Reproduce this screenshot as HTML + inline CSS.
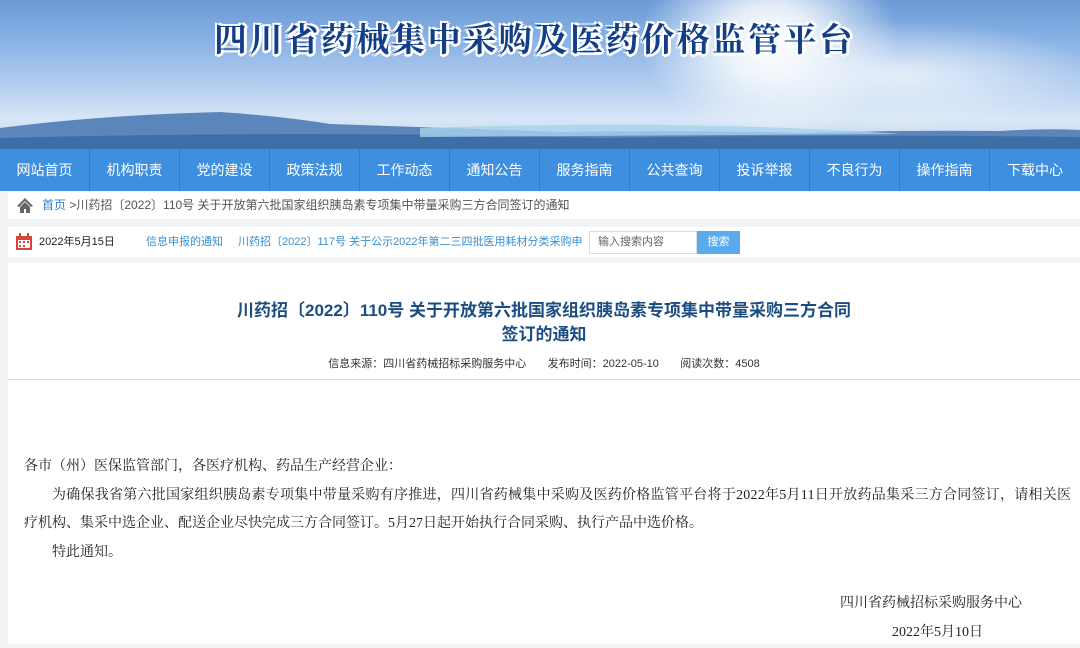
<!DOCTYPE html>
<html><head><meta charset="utf-8"><style>
*{margin:0;padding:0;box-sizing:border-box}
body{width:1080px;height:644px;overflow:hidden;background:#f2f3f5;font-family:"Liberation Sans","Noto Sans CJK SC",sans-serif;position:relative}
.banner{position:absolute;left:0;top:0;width:1080px;height:149px;background:linear-gradient(180deg,#6a9ad6 0%,#8db4e6 30%,#b6d0f0 60%,#d8e6f6 80%,#c4d8ee 100%);overflow:hidden}
.sun{position:absolute;left:640px;top:-60px;width:260px;height:200px;background:radial-gradient(ellipse at center,#fff 0%,rgba(255,255,255,.8) 25%,rgba(255,255,255,0) 70%)}
.cloud{position:absolute;left:700px;top:20px;width:400px;height:110px;background:radial-gradient(ellipse,rgba(255,255,255,.7),rgba(255,255,255,0) 70%)}
.title{position:absolute;left:214px;top:14px;font-size:33px;font-weight:bold;color:#123e88;letter-spacing:2.6px;font-family:"Noto Serif CJK SC","Noto Sans CJK SC",serif;text-shadow:-2px -2px 0 #fff,2px -2px 0 #fff,-2px 2px 0 #fff,2px 2px 0 #fff,0 3px 0 #fff,3px 0 0 #fff}
.nav{position:absolute;left:0;top:149px;width:1080px;height:42px;background:#3f8fe0;display:flex}
.nav div{width:90.2px;height:42px;line-height:42px;text-align:center;color:#fff;font-size:14px;border-right:1px solid #2f7acb}
.crumb{position:absolute;left:8px;top:192px;width:1072px;height:27px;background:#fff;font-size:12px;color:#555;line-height:27px;padding-left:34px}
.crumb a{color:#3a7fc8}
.bar{position:absolute;left:8px;top:227px;width:1072px;height:30px;background:#fff;font-size:11px;line-height:30px}
.main{position:absolute;left:8px;top:263px;width:1072px;height:381px;background:#fff}
h1{position:absolute;left:0;width:1072px;top:36px;text-align:center;font-size:17px;color:#1b4d82;line-height:24px;font-weight:bold}
.meta{position:absolute;top:92px;left:0;width:1072px;text-align:center;font-size:11px;color:#333}
.hr{position:absolute;top:116px;left:0;width:1072px;border-top:1px solid #ddd}
.body{position:absolute;left:16px;top:190px;width:1100px;font-family:"Liberation Serif","Noto Serif CJK SC",serif;font-size:14px;color:#222;line-height:28.5px;white-space:nowrap}
.body p{height:28.5px}
</style></head><body>
<div class="banner"><div class="cloud"></div><div class="sun"></div>
<svg style="position:absolute;left:0;top:100px" width="1080" height="49"><path d="M0 28 Q100 15 220 12 Q280 16 330 24 Q450 28 560 32 Q700 30 800 33 Q900 30 1000 31 Q1050 28 1080 30 L1080 49 L0 49Z" fill="#5b86bb"/><path d="M0 38 Q300 30 600 38 Q850 34 1080 37 L1080 49 L0 49Z" fill="#3e6ea8"/><path d="M420 28 Q600 22 760 27 Q850 30 900 34 L420 37Z" fill="#a8d2ec" opacity=".8"/></svg>
<div class="title">四川省药械集中采购及医药价格监管平台</div></div>
<div class="nav"><div>网站首页</div><div>机构职责</div><div>党的建设</div><div>政策法规</div><div>工作动态</div><div>通知公告</div><div>服务指南</div><div>公共查询</div><div>投诉举报</div><div>不良行为</div><div>操作指南</div><div style="border:none">下载中心</div></div>
<div class="crumb"><svg style="position:absolute;left:8px;top:5px" width="18" height="16"><path d="M9 1 L1 9 L3 10 L9 4 L15 10 L17 9Z M4 10 L4 16 L8 16 L8 12 L10 12 L10 16 L14 16 L14 10 L9 5Z" fill="#666"/></svg><a>首页</a> &gt;川药招〔2022〕110号 关于开放第六批国家组织胰岛素专项集中带量采购三方合同签订的通知</div>
<div class="bar"><svg style="position:absolute;left:8px;top:6px" width="16" height="17"><rect x="0" y="3" width="16" height="14" fill="#d9443a"/><rect x="2" y="7" width="12" height="8" fill="#fff"/><rect x="3" y="0" width="2" height="4" fill="#d9443a"/><rect x="11" y="0" width="2" height="4" fill="#d9443a"/><g fill="#d9443a"><rect x="3" y="8" width="2" height="2"/><rect x="7" y="8" width="2" height="2"/><rect x="11" y="8" width="2" height="2"/><rect x="3" y="12" width="2" height="2"/><rect x="7" y="12" width="2" height="2"/></g></svg>
<span style="position:absolute;left:31px;color:#222">2022年5月15日</span>
<span style="position:absolute;left:138px;color:#3a8fd0;white-space:nowrap">信息申报的通知</span>
<span style="position:absolute;left:230px;color:#3a8fd0;white-space:nowrap">川药招〔2022〕117号 关于公示2022年第二三四批医用耗材分类采购申</span>
<div style="position:absolute;left:581px;top:4px;width:108px;height:23px;border:1px solid #ddd;color:#666;line-height:21px;padding-left:8px;background:#fff">输入搜索内容</div>
<div style="position:absolute;left:689px;top:4px;width:43px;height:23px;background:#5aaaf0;color:#fff;line-height:23px;text-align:center">搜索</div></div>
<div class="main">
<h1>川药招〔2022〕110号 关于开放第六批国家组织胰岛素专项集中带量采购三方合同<br>签订的通知</h1>
<div class="meta">信息来源：四川省药械招标采购服务中心&nbsp;&nbsp;&nbsp;&nbsp;&nbsp;&nbsp;&nbsp;发布时间：2022-05-10&nbsp;&nbsp;&nbsp;&nbsp;&nbsp;&nbsp;&nbsp;阅读次数：4508</div>
<div class="hr"></div>
<div class="body">
<p>各市（州）医保监管部门，各医疗机构、药品生产经营企业：</p>
<p style="padding-left:28px;letter-spacing:0.25px">为确保我省第六批国家组织胰岛素专项集中带量采购有序推进，四川省药械集中采购及医药价格监管平台将于2022年5月11日开放药品集采三方合同签订，请相关医</p>
<p>疗机构、集采中选企业、配送企业尽快完成三方合同签订。5月27日起开始执行合同采购、执行产品中选价格。</p>
<p style="padding-left:28px">特此通知。</p>
<p style="position:absolute;left:816px;top:137px;white-space:nowrap">四川省药械招标采购服务中心</p>
<p style="position:absolute;left:868px;top:166px;white-space:nowrap">2022年5月10日</p>
</div></div>
</body></html>
